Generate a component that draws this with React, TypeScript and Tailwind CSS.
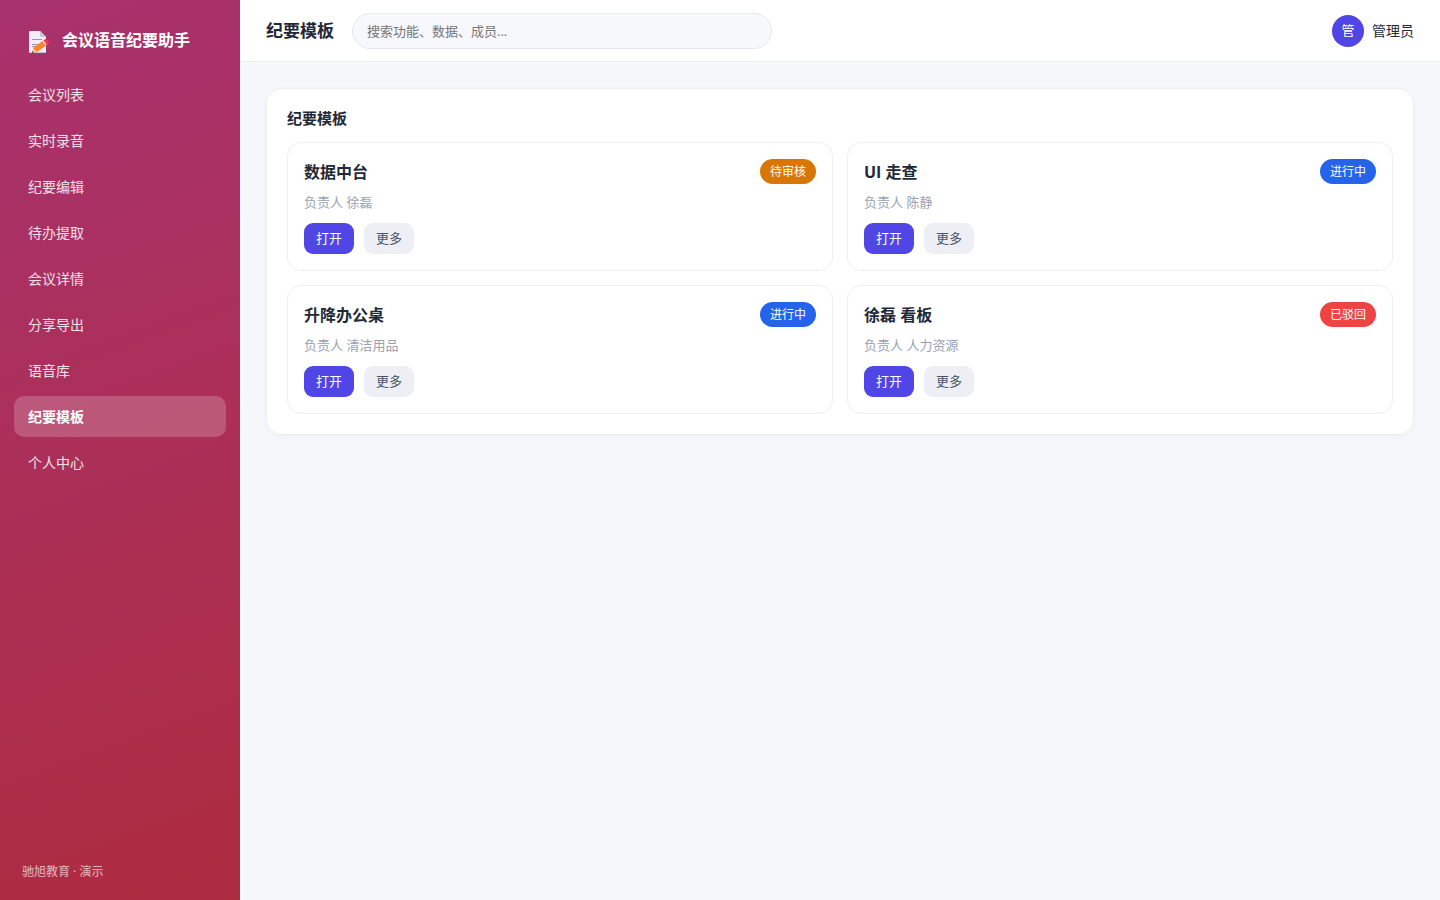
const NAV_ITEMS = [
  "会议列表",
  "实时录音",
  "纪要编辑",
  "待办提取",
  "会议详情",
  "分享导出",
  "语音库",
  "纪要模板",
  "个人中心",
];

const ACTIVE_ITEM = "纪要模板";

const STATUS_COLORS = {
  待审核: "bg-[#d97706]",
  进行中: "bg-[#2563eb]",
  已驳回: "bg-[#ef4444]",
};

type Template = {
  name: string;
  owner: string;
  status: keyof typeof STATUS_COLORS;
};

const TEMPLATES: Template[] = [
  { name: "数据中台", owner: "徐磊", status: "待审核" },
  { name: "UI 走查", owner: "陈静", status: "进行中" },
  { name: "升降办公桌", owner: "清洁用品", status: "进行中" },
  { name: "徐磊 看板", owner: "人力资源", status: "已驳回" },
];

function MemoIcon() {
  return (
    <svg width="22" height="28" viewBox="0 -4 22 28" aria-hidden="true">
      <path d="M2 1h10l6 6v15a1 1 0 0 1-1 1H2a1 1 0 0 1-1-1V2a1 1 0 0 1 1-1Z" fill="#f3eef8" />
      <path d="M1 22h17a1 1 0 0 1-1 1H2a1 1 0 0 1-1-1Z" fill="#cdc4d6" />
      <path d="M12 1l6 6h-5a1 1 0 0 1-1-1Z" fill="#cdc4d6" />
      <path d="M4 9.500h10M4 14.500h6M4 16.500h4" stroke="#9b93aa" />
      <path d="M5 18 14.500 11l3.500 4.500L9 22l-4 .5Z" fill="#ff822d" />
      <path d="M5 18l4 4-4.500.8Z" fill="#ffce7c" />
      <path d="M4.700 20.800l1.300 1.700-2 .5Z" fill="#402a32" />
      <path d="M14.500 11l1.200-.9 3.400 4.600-1.100.8Z" fill="#d3d3d3" />
      <path d="M15.500 10.200 17 9.200a1.500 1.500 0 0 1 2 .3l2 2.300a1.500 1.500 0 0 1-.3 2L19 15Z" fill="#f8315a" />
    </svg>
  );
}

function Sidebar() {
  return (
    <aside className="flex w-60 shrink-0 flex-col bg-[linear-gradient(160deg,#a8326e,#ae2c40)] px-3.5 py-5 text-white">
      <div className="mb-3.5 flex h-10 items-center gap-3 px-3.5">
        <MemoIcon />
        <span className="text-base font-bold whitespace-nowrap">会议语音纪要助手</span>
      </div>
      <nav className="flex flex-col gap-[5px]">
        {NAV_ITEMS.map((item) => (
          <a
            key={item}
            href="#"
            aria-current={item === ACTIVE_ITEM ? "page" : undefined}
            className={
              item === ACTIVE_ITEM
                ? "flex h-[41px] items-center rounded-[10px] bg-white/20 px-3.5 text-sm font-bold text-white"
                : "flex h-[41px] items-center rounded-[10px] px-3.5 text-sm text-white/85"
            }
          >
            {item}
          </a>
        ))}
      </nav>
      <p className="mt-auto px-2 text-xs leading-4 text-white/65">驰旭教育 · 演示</p>
    </aside>
  );
}

function Topbar() {
  return (
    <header className="flex h-[62px] items-center border-b border-[#eeeff3] bg-white px-[26px]">
      <h1 className="mr-[18px] text-[17px] font-bold whitespace-nowrap">纪要模板</h1>
      <input
        type="search"
        aria-label="搜索"
        placeholder="搜索功能、数据、成员..."
        className="h-9 w-full max-w-[420px] rounded-full border border-[#e5e7ef] bg-[#f7f8fc] px-3.5 text-[13px] outline-none placeholder:text-[#757575]"
      />
      <div className="ml-auto flex shrink-0 items-center gap-2 pl-4">
        <span className="flex size-8 items-center justify-center rounded-full bg-[#4f46e5] text-[13px] text-white">
          管
        </span>
        <span className="text-sm">管理员</span>
      </div>
    </header>
  );
}

function TemplateCard({ template }: { template: Template }) {
  return (
    <article className="rounded-[14px] border border-[#eeeff3] p-4">
      <div className="flex h-[25px] items-center justify-between">
        <h3 className="text-base font-bold">{template.name}</h3>
        <span
          className={`flex h-[25px] items-center rounded-full px-2.5 text-xs text-white ${STATUS_COLORS[template.status]}`}
        >
          {template.status}
        </span>
      </div>
      <p className="mt-2 text-[13px] leading-5 text-[#98a2b3]">负责人 {template.owner}</p>
      <div className="mt-[11px] flex gap-2.5">
        <button className="h-[31px] rounded-[9px] bg-[#4f46e5] px-3 text-[13px] text-white">打开</button>
        <button className="h-[31px] rounded-[9px] bg-[#eeeff4] px-3 text-[13px] text-[#475569]">更多</button>
      </div>
    </article>
  );
}

export default function App() {
  return (
    <div className="flex min-h-screen bg-[#f5f7fb] font-['Open_Sans','Noto_Sans_CJK_SC',sans-serif] text-[#1f2937]">
      <Sidebar />
      <div className="min-w-0 flex-1">
        <Topbar />
        <main className="p-[26px]">
          <section className="rounded-2xl border border-[#eeeff3] bg-white p-5 shadow-[0_2px_8px_rgba(30,30,80,0.03)]">
            <h2 className="mb-3.5 text-[15px] leading-[19px] font-bold">纪要模板</h2>
            <div className="grid grid-cols-2 gap-3.5">
              {TEMPLATES.map((template) => (
                <TemplateCard key={template.name} template={template} />
              ))}
            </div>
          </section>
        </main>
      </div>
    </div>
  );
}
